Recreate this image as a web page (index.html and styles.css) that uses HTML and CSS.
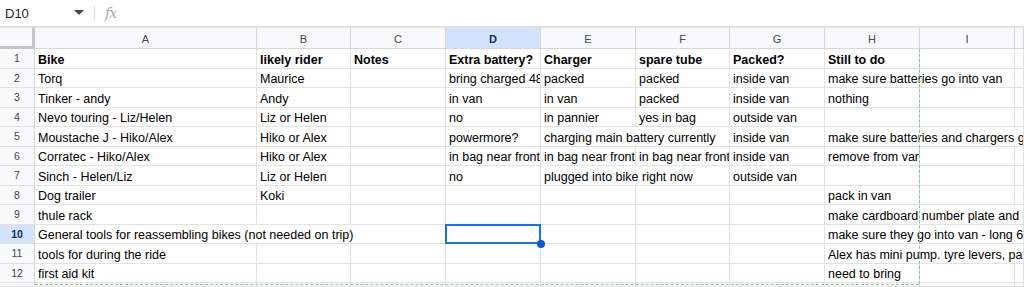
FILE: index.html
```html
<!DOCTYPE html>
<html>
<head>
<meta charset="utf-8">
<link rel="stylesheet" href="styles.css">
</head>
<body>
<div class="fbar">
  <div class="namebox">D10</div>
  <svg class="caret" width="10" height="6" viewBox="0 0 10 6"><path d="M0 0 L10 0 L5 5 Z" fill="#444746"/></svg>
  <div class="sep"></div>
  <div class="fx">fx</div>
</div>
<div class="sheet">
  <div class="corner"></div>
  <div class="ch">A</div><div class="ch">B</div><div class="ch">C</div><div class="ch on">D</div><div class="ch">E</div><div class="ch">F</div><div class="ch">G</div><div class="ch">H</div><div class="ch">I</div><div class="ch"></div>

  <div class="rh">1</div>
  <div class="c b">Bike</div><div class="c b">likely rider</div><div class="c b">Notes</div><div class="c b">Extra battery?</div><div class="c b">Charger</div><div class="c b">spare tube</div><div class="c b">Packed?</div><div class="c b">Still to do</div><div class="c"></div><div class="c"></div>

  <div class="rh">2</div>
  <div class="c">Torq</div><div class="c">Maurice</div><div class="c"></div><div class="c">bring charged 48v battery</div><div class="c">packed</div><div class="c">packed</div><div class="c">inside van</div><div class="c s2">make sure batteries go into van</div><div class="c"></div>

  <div class="rh">3</div>
  <div class="c">Tinker - andy</div><div class="c">Andy</div><div class="c"></div><div class="c">in van</div><div class="c">in van</div><div class="c">packed</div><div class="c">inside van</div><div class="c">nothing</div><div class="c"></div><div class="c"></div>

  <div class="rh">4</div>
  <div class="c">Nevo touring - Liz/Helen</div><div class="c">Liz or Helen</div><div class="c"></div><div class="c">no</div><div class="c">in pannier</div><div class="c">yes in bag</div><div class="c">outside van</div><div class="c"></div><div class="c"></div><div class="c"></div>

  <div class="rh">5</div>
  <div class="c">Moustache J - Hiko/Alex</div><div class="c">Hiko or Alex</div><div class="c"></div><div class="c">powermore?</div><div class="c s2">charging main battery currently</div><div class="c">inside van</div><div class="c s3">make sure batteries and chargers go into van</div>

  <div class="rh">6</div>
  <div class="c">Corratec - Hiko/Alex</div><div class="c">Hiko or Alex</div><div class="c"></div><div class="c">in bag near front</div><div class="c">in bag near front</div><div class="c">in bag near front</div><div class="c">inside van</div><div class="c">remove from van</div><div class="c"></div><div class="c"></div>

  <div class="rh">7</div>
  <div class="c">Sinch - Helen/Liz</div><div class="c">Liz or Helen</div><div class="c"></div><div class="c">no</div><div class="c s2">plugged into bike right now</div><div class="c">outside van</div><div class="c"></div><div class="c"></div><div class="c"></div>

  <div class="rh">8</div>
  <div class="c">Dog trailer</div><div class="c">Koki</div><div class="c"></div><div class="c"></div><div class="c"></div><div class="c"></div><div class="c"></div><div class="c">pack in van</div><div class="c"></div><div class="c"></div>

  <div class="rh">9</div>
  <div class="c">thule rack</div><div class="c"></div><div class="c"></div><div class="c"></div><div class="c"></div><div class="c"></div><div class="c"></div><div class="c s3">make cardboard number plate and get lights</div>

  <div class="rh on">10</div>
  <div class="c s3">General tools for reassembling bikes (not needed on trip)</div><div class="c sel"></div><div class="c"></div><div class="c"></div><div class="c"></div><div class="c s3">make sure they go into van - long 6mm hex key</div>

  <div class="rh">11</div>
  <div class="c">tools for during the ride</div><div class="c"></div><div class="c"></div><div class="c"></div><div class="c"></div><div class="c"></div><div class="c"></div><div class="c s3">Alex has mini pump. tyre levers, patches</div>

  <div class="rh">12</div>
  <div class="c">first aid kit</div><div class="c"></div><div class="c"></div><div class="c"></div><div class="c"></div><div class="c"></div><div class="c"></div><div class="c">need to bring</div><div class="c"></div><div class="c"></div>

  <div class="rh last"></div>
  <div class="c"></div><div class="c"></div><div class="c"></div><div class="c"></div><div class="c"></div><div class="c"></div><div class="c"></div><div class="c"></div><div class="c"></div><div class="c"></div>

  <div class="pb-v"></div>
  <div class="pb-h"></div>
</div>
</body>
</html>
```
FILE: styles.css
```css
html, body {
  margin: 0;
  padding: 0;
  background: #fff;
  overflow: hidden;
  width: 1024px;
  height: 287px;
  font-family: "Liberation Sans", Arial, sans-serif;
}

.fbar {
  height: 26px;
  border-bottom: 1px solid #e1e3e1;
  display: flex;
  align-items: center;
  box-sizing: content-box;
}

.namebox {
  width: 69px;
  padding-left: 5px;
  font-size: 13px;
  color: #1f1f1f;
}

.sep {
  width: 1px;
  height: 16px;
  background: #dadce0;
  margin-left: 10px;
  margin-right: 10px;
}

.fx {
  font-family: "DejaVu Serif", "Liberation Serif", serif;
  font-style: italic;
  font-size: 14px;
  color: #a8aaad;
  letter-spacing: -1px;
}

.sheet {
  position: relative;
  display: grid;
  grid-template-columns: 35px 222px 94px 95px 95px 95px 94px 95px 95px 95px 9px;
  grid-template-rows: 22px repeat(12, 19.5px) 4px;
  font-size: 12.5px;
  overflow: hidden;
}

.corner {
  background: #f8f9fa;
  border-right: 3px solid #c4c7c5;
  border-bottom: 3px solid #c4c7c5;
  border-top: 1px solid #e1e1e1;
  box-sizing: border-box;
}

.ch {
  background: #f8f9fa;
  border-top: 1px solid #e1e1e1;
  border-right: 1px solid #d6d8da;
  border-bottom: 1px solid #d6d8da;
  box-sizing: border-box;
  display: flex;
  align-items: center;
  justify-content: center;
  font-size: 11px;
  color: #444746;
  padding-top: 1px;
}

.ch.on {
  background: #d3e3fd;
  color: #0b2f6b;
  font-weight: bold;
}

.rh {
  background: #f8f9fa;
  border-right: 1px solid #d6d8da;
  border-bottom: 1px solid #e1e1e1;
  box-sizing: border-box;
  display: flex;
  align-items: center;
  justify-content: center;
  font-size: 10.5px;
  color: #444746;
}

.rh.on {
  background: #d3e3fd;
  color: #0b2f6b;
  font-weight: bold;
}

.c {
  border-right: 1px solid #e2e2e2;
  border-bottom: 1px solid #e2e2e2;
  box-sizing: border-box;
  padding: 0 3px 0 3px;
  white-space: nowrap;
  overflow: hidden;
  display: flex;
  align-items: flex-end;
  line-height: 16px;
  color: #000;
}

.c.b {
  font-weight: bold;
}

.s2 { grid-column: span 2; }
.s3 { grid-column: span 3; }

.sel {
  position: relative;
  overflow: visible;
}

.sel::after {
  content: "";
  position: absolute;
  left: -1px;
  top: -1px;
  right: -1px;
  bottom: -1px;
  border: 2px solid #1a73e8;
  box-sizing: border-box;
  pointer-events: none;
}

.sel::before {
  content: "";
  position: absolute;
  right: -5px;
  bottom: -5px;
  width: 8px;
  height: 8px;
  border-radius: 50%;
  background: #0b57d0;
  z-index: 2;
}

.pb-v {
  position: absolute;
  z-index: 3;
  left: 919px;
  top: 22px;
  height: 235px;
  border-left: 1px dashed #7dc98f;
}

.pb-h {
  position: absolute;
  z-index: 3;
  left: 35px;
  top: 257px;
  width: 884px;
  border-top: 1px dashed #7dc98f;
}
```
